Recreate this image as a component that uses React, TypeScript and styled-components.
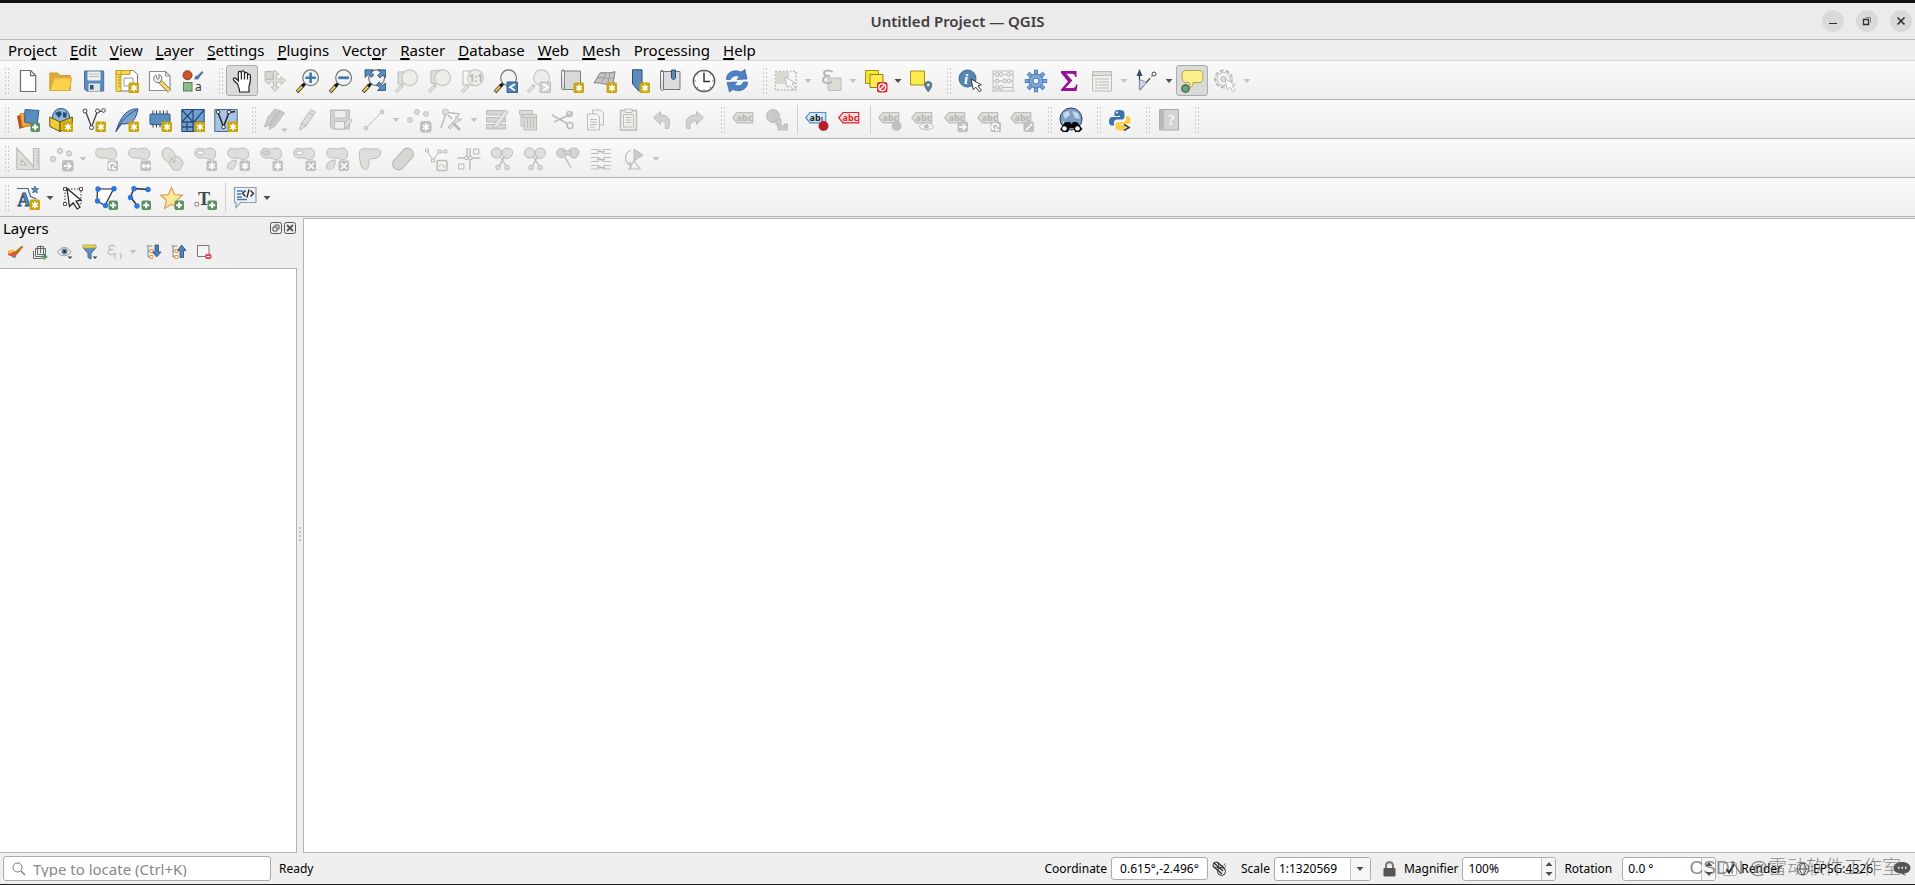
import React from "react";
import styled, { createGlobalStyle, css } from "styled-components";

const UI_FONT = '"Noto Sans", "Open Sans", "Noto Sans CJK SC", sans-serif';

const GlobalStyle = createGlobalStyle`
  *, *::before, *::after { box-sizing: border-box; }
  body { margin: 0; background: #efefef; color: #000; font-family: ${UI_FONT}; }
  button, input, select { font: inherit; color: inherit; margin: 0; }
  svg { flex: none; overflow: visible; }
`;

/* ---------- layout ---------- */

const Window = styled.div`
  display: flex;
  flex-direction: column;
  min-height: 100vh;
  border-top: 3px solid #111;
  border-bottom: 1px solid #231f20;
  overflow: hidden;
`;

const TitleBar = styled.header`
  display: grid;
  grid-template-columns: 1fr auto 1fr;
  align-items: center;
  height: 37px;
  padding: 0 3px;
  background: #ebebeb;
  border-bottom: 1px solid #bdbdbd;
`;

const Title = styled.h1`
  grid-column: 2;
  margin: 0;
  font-size: 15px;
  line-height: 20px;
  font-weight: 600;
  color: #3d3d3d;
`;

const WindowButtons = styled.div`
  display: flex;
  justify-content: flex-end;
  gap: 12px;
`;

const RoundButton = styled.button`
  display: grid;
  place-items: center;
  width: 22px;
  height: 22px;
  padding: 0;
  border: 0;
  border-radius: 50%;
  background: #dadada;
  color: #2e2e2e;
`;

const MenuBar = styled.nav`
  display: flex;
  gap: 13px;
  height: 21px;
  padding: 0 8px;
  background: #efefef;
  border-bottom: 1px solid #d9d9d9;
`;

const MenuItem = styled.button`
  padding: 0;
  border: 0;
  background: none;
  font-size: 15px;
  line-height: 20px;
`;

const Mnemonic = styled.span`
  text-decoration: underline;
  text-decoration-thickness: 2px;
  text-underline-offset: 2px;
  text-decoration-skip-ink: none;
`;

const ToolRow = styled.div`
  display: flex;
  height: 39px;
  border-bottom: 1px solid #b4b4b4;
  background: linear-gradient(#fafafa, #efefef);
`;

const ToolGroup = styled.div`
  display: flex;
  gap: 1px;
  padding: 4px 5px 3px 0;
`;

const Grip = styled.span`
  width: 5px;
  height: 28px;
  margin: 2px 2px 0 4px;
  background-image: radial-gradient(circle, #cacaca 1px, transparent 1px);
  background-size: 3px 4px;
`;

const ToolButton = styled.button<{ $checked?: boolean; $menu?: boolean }>`
  display: flex;
  align-items: center;
  width: ${(p) => (p.$menu ? 44 : 32)}px;
  height: 31px;
  padding: 0 3px;
  gap: 6px;
  border: 1px solid transparent;
  border-radius: 3px;
  background: none;
  ${(p) =>
    p.$checked &&
    css`
      border-color: #aaa;
      background: #dadada;
    `}
`;

const Divider = styled.span`
  width: 6px;
  margin: 1px 0;
  background: linear-gradient(#d0d0d0, #d0d0d0) center / 1px 100% no-repeat;
`;

const Workspace = styled.main`
  display: flex;
  flex: 1;
  min-height: 300px;
`;

const Dock = styled.aside`
  display: flex;
  flex-direction: column;
  width: 297px;
`;

const DockHeader = styled.div`
  display: flex;
  align-items: center;
  gap: 2px;
  height: 22px;
  padding: 0 1px 0 3px;
`;

const DockTitle = styled.h2`
  flex: 1;
  margin: 0;
  font-size: 15px;
  line-height: 20px;
  font-weight: 400;
`;

const DockButton = styled.button`
  width: 12px;
  height: 12px;
  padding: 0;
  border: 0;
  background: none;
  display: flex;
`;

const DockTools = styled.div`
  display: flex;
  align-items: center;
  gap: 1px;
  height: 29px;
  padding: 0 3px 3px;
`;

const SmallTool = styled.button<{ $menu?: boolean }>`
  display: flex;
  align-items: center;
  gap: 6px;
  width: ${(p) => (p.$menu ? 38 : 24)}px;
  height: 24px;
  padding: 0 4px;
  border: 0;
  background: none;
`;

const LayerTree = styled.div`
  flex: 1;
  border: 1px solid #b4b4b4;
  border-left: 0;
  background: #fff;
`;

const Splitter = styled.div`
  display: grid;
  place-items: center;
  width: 6px;
`;

const SplitterDots = styled.span`
  width: 2px;
  height: 16px;
  background: repeating-linear-gradient(#c4c4c4 0 2px, transparent 2px 4px);
`;

const MapCanvas = styled.section`
  flex: 1;
  margin-top: 1px;
  border: 1px solid #b4b4b4;
  border-right: 0;
  background: #fff;
`;

/* ---------- status bar ---------- */

const StatusBar = styled.footer`
  position: relative;
  display: flex;
  align-items: center;
  height: 31px;
  padding: 0 4px 0 3px;
  font-size: 12px;
  line-height: 16px;
`;

const Locator = styled.label`
  display: flex;
  align-items: center;
  gap: 7px;
  width: 268px;
  height: 25px;
  padding: 0 8px;
  border: 1px solid #acacac;
  border-radius: 3px;
  background: #fff;
`;

const LocatorInput = styled.input`
  flex: 1;
  min-width: 0;
  padding: 0;
  border: 0;
  outline: 0;
  background: none;
  font-size: 15px;
  &::placeholder { color: #888; opacity: 1; }
`;

const Message = styled.span`
  flex: 1;
  padding-left: 8px;
`;

const Field = styled.label<{ $after: number; $gap?: number }>`
  display: flex;
  align-items: center;
  gap: ${(p) => p.$gap ?? 4}px;
  margin-right: ${(p) => p.$after}px;
`;

const boxed = css`
  display: flex;
  height: 24px;
  border: 1px solid #acacac;
  border-radius: 3px;
  background: #fff;
  overflow: hidden;
`;

const CoordInput = styled.input`
  ${boxed}
  width: 97px;
  height: 23px;
  padding: 0;
  text-align: center;
`;

const Box = styled.span<{ $width: number }>`
  ${boxed}
  width: ${(p) => p.$width}px;
`;

const ScaleSelect = styled.select`
  flex: 1;
  min-width: 0;
  padding: 0 4px;
  border: 0;
  appearance: none;
  background: none;
`;

const SpinInput = styled.input`
  flex: 1;
  min-width: 0;
  padding: 0 5px;
  border: 0;
  background: none;
`;

const BoxEnd = styled.span<{ $width: number }>`
  display: flex;
  flex-direction: column;
  align-items: center;
  justify-content: center;
  width: ${(p) => p.$width}px;
  border-left: 1px solid #c4c4c4;
  background: #f6f6f6;
`;

const StepButton = styled.button`
  display: flex;
  align-items: center;
  height: 10px;
  padding: 0;
  border: 0;
  background: none;
`;

const StatusButton = styled.button<{ $after: number }>`
  display: flex;
  align-items: center;
  gap: 3px;
  margin-right: ${(p) => p.$after}px;
  padding: 0;
  border: 0;
  background: none;
`;

const CheckWrap = styled.span`
  position: relative;
  display: flex;
  width: 14px;
  height: 14px;
  svg { position: absolute; inset: 1px; pointer-events: none; }
`;

const CheckBox = styled.input`
  appearance: none;
  width: 14px;
  height: 14px;
  border: 1px solid #acacac;
  border-radius: 2px;
  background: #fff;
`;

const Watermark = styled.span`
  position: absolute;
  right: 14px;
  top: 0;
  font-family: "Liberation Sans", "Noto Sans CJK SC", sans-serif;
  font-size: 19px;
  line-height: 30px;
  font-weight: 300;
  color: rgba(90, 90, 90, 0.7);
  white-space: nowrap;
  pointer-events: none;
`;

/* ---------- drawings ---------- */

const F = "#dededb";
const S = "#bcbcb9";
const BLUE = "#5a8cbe";
const NAVY = "#2c4a6e";

const Star6 = ({ c = "#fff" }: { c?: string }) => (
  <path d="M19 15.5v7M16 17.2l6 3.6M22 17.2l-6 3.6" stroke={c} strokeWidth="1.5" fill="none" />
);
const Gold = () => (
  <g>
    <rect x="13.5" y="13.5" width="10.5" height="10.5" rx="1.5" fill="#c9a60c" />
    <Star6 />
    <circle cx="19" cy="19" r="1.8" fill="#fff" />
  </g>
);
const Green = () => (
  <g>
    <rect x="14.5" y="14.5" width="9.5" height="9.5" rx="1.8" fill="#5b8f62" />
    <path d="M19.2 16.2v6M16.2 19.2h6" stroke="#fff" strokeWidth="2" />
  </g>
);
const Gray = ({ d }: { d: string }) => (
  <g>
    <rect x="13.5" y="13.5" width="10.5" height="10.5" rx="1.8" fill="#c0c0bd" />
    <path d={d} stroke="#fff" strokeWidth="1.6" fill="none" />
  </g>
);
const G_STAR = "M19 15.2v7.6M15.8 17.1l6.2 3.8M22 17.1l-6.2 3.8";
const G_ARROW = "M15 19h6.5M18.7 16l3 3-3 3";
const G_X = "M16 16l6 6M22 16l-6 6";
const G_ROT = "M17 21.8a3.2 3.2 0 1 1 4.5-2.8M19 19v3h3";
const G_SCALE = "M15.5 19h7M17.5 17l-2 2 2 2M20.5 17l2 2-2 2";
const G_PEN = "M16 22l6-6";

const Lens = ({ off, children }: { off?: boolean; children?: React.ReactNode }) => (
  <g>
    <path d="M1 23L7.5 16" stroke={off ? "#c6c6c3" : "#3a3a30"} strokeWidth="3.6" />
    <path d="M1.4 22.4L6 17.5" stroke={off ? "#e2e2df" : "#f2d04a"} strokeWidth="2" />
    {!off && <path d="M6.5 17L9.5 14" stroke="#111" strokeWidth="3" />}
    <circle cx="14.6" cy="8.8" r="7.9" fill={off ? "#ededeb" : "#f2f4f4"} stroke={off ? "#c6c6c3" : "#6f7474"} strokeWidth="1.2" />
    {children}
  </g>
);
const PEANUT = "M1.8 6C1.8 1.5 5 .8 9 1.800s5-.9 8.500-.7c4 .2 5.500 3.500 5 7s-2.500 4.500-5 4.500S13 10.500 10 11 1.800 11 1.800 6z";
const Peanut = () => <path d={PEANUT} fill={F} stroke={S} />;
const Hole = () => <ellipse cx="7.500" cy="5.800" rx="3.500" ry="2" fill="#fafafa" stroke={S} />;
const Leaf = () => <path d="M1.500 20c0-5 4-6.500 9-7-1 2 0 5-2 7.500s-7 3-7-.5z" fill={F} stroke={S} />;
const Tag = ({ fill = F, stroke = S, text = "#b4b4b1", label = "abc" }) => (
  <g>
    <path d="M.8 9.700L5 4.500h15.700v10.300H5z" fill={fill} stroke={stroke} strokeWidth="1.2" />
    <text x="4.600" y="13" fontSize="9" fontWeight="700" fill={text} fontFamily="Noto Sans">
      {label}
    </text>
  </g>
);
const Pin = ({ c }: { c: string }) => (
  <g>
    <path d="M17 9v5" stroke={c} strokeWidth="1.200" />
    <circle cx="18.500" cy="18" r="5" fill={c} />
  </g>
);
const Cursor = ({ x = 0, y = 0, s = "#333" }) => (
  <path d={`M${x} ${y}l2.200 10.500 2.600-2.300 3.600 4.600 2-1.500-3.500-4.500 3.400-1z`} fill="#fff" stroke={s} strokeWidth="1" />
);
const Scissors = () => (
  <g fill={F} stroke={S}>
    <circle cx="6.500" cy="6" r="5.200" />
    <path d="M13 3c2-3 9-2.500 9.500 2s-4 7-7 6.500S11.500 6 13 3z" />
    <path d="M10 9l6 10M14.500 9l-5 10" strokeWidth="1.400" />
    <circle cx="8" cy="20.500" r="2.300" />
    <circle cx="17" cy="20.500" r="2.300" />
  </g>
);

const icons: Record<string, React.ReactNode> = {
  new: <path d="M4.500 1.500h10.200l5 5v16H4.500zM14.500 1.500v5.200h5.200" fill="#fff" stroke="#6d6d6d" strokeWidth="1.200" />,
  open: (
    <g>
      <path d="M.8 21.500V4h8l2 2.500h10.500v15z" fill="#e3a93a" stroke="#cc9a35" />
      <path d="M1 21.500L5.500 9h17.300l-2.500 12.500z" fill="#fcd24c" stroke="#dcae3c" />
    </g>
  ),
  save: (
    <g>
      <path d="M2.500 2h19.200v20H4.500l-2-2z" fill={BLUE} stroke="#4b6f95" />
      <path d="M5.500 2.500h13v9h-13z" fill="#efefef" />
      <path d="M7 5h10M7 7.500h10" stroke="#bdbdbd" />
      <path d="M6.500 14.500h11.500v7.500H6.500z" fill="#e0e4e8" />
      <path d="M8 16h3.500v4.500H8z" fill="#41505e" />
    </g>
  ),
  newLayout: (
    <g>
      <path d="M5 1.500h13.500l4 4v16.500H5z" fill="#fff" stroke="#777" />
      <path d="M1 1.500h5v21H1zM1 1.500h14v4H1z" fill="#f7d84e" stroke="#c3a12a" />
      <path d="M3.500 8h2M3.500 11h2M3.500 14h2M3.500 17h2" stroke="#8a7628" />
      <path d="M9 9h9v8H9z" fill="#fff" stroke="#999" />
      <Gold />
    </g>
  ),
  layouts: (
    <g>
      <path d="M1.500 2.500h16l4.500 4.500v14.500H1.500z" fill="#fff" stroke="#8a8f99" strokeWidth="1.200" />
      <path d="M17.500 2.500V7H22" fill="none" stroke="#8a8f99" />
      <path d="M12 12.500l9.500 9.500" stroke="#8a7a3a" strokeWidth="4.400" />
      <path d="M12.500 13l8.800 8.800" stroke="#f3dc73" strokeWidth="2.800" />
      <path d="M8 6c-2.500 1-3 4.500-1 6.500 1.500 1.500 4 1.500 5.500.3l1.500-3.300C14 7 12 5.500 10.500 5.800l1 3-2 1.500z" fill="#eee" stroke="#777" />
    </g>
  ),
  style: (
    <g>
      <circle cx="6.500" cy="6.200" r="4.500" fill="#c9532c" stroke="#9a3f20" />
      <rect x="2.500" y="13.500" width="8.500" height="8.500" fill="#8fb98b" stroke="#56805a" />
      <path d="M13.500 10.500c0-3 1-4 3-4L21 2l1.500 1.500-4 4.800c0 2-2 2.500-5 2.200z" fill="#5577a6" />
      <text x="14" y="22" fontSize="12" fill="#333" fontFamily="Noto Sans">a</text>
    </g>
  ),
  hand: (
    <path
      d="M7.500 15L3.800 11.500c-1.500-2 .6-3.300 2-2l2.500 2.300V4c0-2.300 2.800-2.300 3 0 0-3 3.100-3 3.200 0v.8c.2-2 2.900-2 3 .3v1c.4-1.600 2.800-1.400 2.900.6 0 4 .5 7-1.400 10.500V23H9.700c0-3-1-5-2.200-8zM11.400 4v6.500M14.500 4.500v6M17.500 5.500v5"
      fill="#fff" stroke="#222" strokeWidth="1.200"
    />
  ),
  pan: (
    <g fill={F} stroke={S}>
      <path d="M12 1l4 4.500h-2.500V10H18V7.500l4.500 4-4.500 4V13h-4.500v5H16l-4 4.500L8 18h2.500v-5H6v2.500l-4.500-4L6 7.500V10h4.500V5.500H8z" />
      <path d="M2 2.500h8v8H2z" fill="#d4d4d1" />
    </g>
  ),
  zoomIn: <Lens><path d="M14.600 3.500v10.600M9.300 8.800h10.600" stroke="#3f78ae" strokeWidth="2.600" /></Lens>,
  zoomOut: <Lens><path d="M9.300 8.800h10.600" stroke="#3f78ae" strokeWidth="2.800" /></Lens>,
  zoomFull: (
    <g>
      <Lens />
      <path d="M3 .8h8L8.800 3l3 3-2.500 2.500-3-3L3 8.500zM23.500.8v7.700L21 6l-3 3-2.500-2.500 3-3L16 .8zM23.500 21.500h-8L18 19l-3.500-3.500L17 13l3.500 3.500 3-2.500z" fill={BLUE} stroke={NAVY} strokeWidth=".8" />
    </g>
  ),
  zoomSel: <g><path d="M3 3h12v12H3z" fill={F} stroke={S} /><Lens off /></g>,
  zoomLayer: <g><path d="M3 2l12-1v15l-12-2z" fill={F} stroke={S} /><Lens off /></g>,
  zoomNative: (
    <g>
      <path d="M2 2h14v14H2z" fill="none" stroke={S} />
      <Lens off><text x="7.800" y="12.500" fontSize="10" fontWeight="700" fill="#b4b4b1" fontFamily="Noto Sans">1:1</text></Lens>
    </g>
  ),
  zoomLast: <g><Lens /><path d="M13 13h10.500v10.500H13z" fill="#4d81b5" stroke="#35618e" /><path d="M21 15l-5 3.300 5 3.300" stroke="#fff" strokeWidth="1.800" fill="none" /></g>,
  zoomNext: <g><Lens off /><path d="M13 13h10.500v10.500H13z" fill="#d4d4d1" stroke={S} /><path d="M16 15l5 3.300-5 3.300" stroke="#fff" strokeWidth="1.800" fill="none" /></g>,
  newMap: <g><path d="M1.500 2c0-1.500 3-1.500 3 0v18.500h16V2h-18M1.500 2v17c0 2.500 3 2 3 0" fill="#d9d9d9" stroke="#808080" /><Gold /></g>,
  new3d: <g><path d="M7 4c6-1 9 1 15-1.500L20 15c-6 2-12-2-19-1z" fill="#c4c4c4" stroke="#808080" /><path d="M5 9c6-2 10 2 16 0M13 4L9 13M17 4l-2 10" stroke="#9c9c9c" fill="none" /><Gold /></g>,
  bookmark: <g><path d="M6.500 .8h9.500v21h-3.500l-6-7z" fill={BLUE} stroke={NAVY} /><Gold /></g>,
  bookmarks: <g><path d="M1.500 2.500c0-1.500 3-1.500 3 0v18h16.500v-18H2M1.500 2.500v17c0 2.500 3 2.500 3 1" fill="#dcdcdc" stroke="#777" /><path d="M12.500 1h4v8l-2 2-2-2z" fill={BLUE} stroke={NAVY} /></g>,
  clock: (
    <g>
      <circle cx="12" cy="12" r="10.700" fill="#fff" stroke="#555" strokeWidth="1.300" />
      <path d="M12 4v8.500h6" fill="none" stroke="#333" strokeWidth="1.500" />
      <path d="M12 2v2M12 20v2M2 12h2M20 12h2M5 5l1.200 1.200M19 5l-1.200 1.200M5 19l1.200-1.200M19 19l-1.200-1.200" stroke="#777" />
    </g>
  ),
  refresh: (
    <g fill="#4d81c0" stroke="#3566a0" strokeWidth=".7">
      <path d="M1.500 10.500C1 4 8.500-.5 16 3l4-2.500 2 9.500-10 .5 2.500-3C11 6 7 7 5.500 10.500z" />
      <path d="M22.500 13c.5 6.500-7 11-14.500 7.500L4.500 23 2 13.500l10-.5-2.500 3c3.500 1.500 7.500 1 9-3z" />
    </g>
  ),
  select: <g><path d="M1.500 2.500H22v18.500H1.500z" fill="none" stroke={S} strokeWidth="1.500" strokeDasharray="2 1.500" /><path d="M2 3h13v12H2z" fill="#d8d8d3" /><Cursor x={11} y={8} s={S} /></g>,
  selectExpr: <g><path d="M9 9h13v12.500H9z" fill="#dcdcd7" stroke={S} /><path d="M14 3C10 .5 5 1 5 4s4 3 6 3c-4 0-7 1-7 4s5 4 9 2" fill="none" stroke="#b8b8b5" strokeWidth="2" /></g>,
  deselect: (
    <g>
      <path d="M1.500 1.500h13v13h-13z" fill="#f7e331" stroke="#a3931c" />
      <path d="M6 5.500h13v13H6z" fill="#fdea4c" stroke="#8f821c" />
      <rect x="13" y="13" width="10.500" height="10.500" rx="2" fill="#d8343c" />
      <circle cx="18.200" cy="18.200" r="3.400" fill="none" stroke="#fff" strokeWidth="1.300" /><path d="M16 20.500l4.500-4.500" stroke="#fff" strokeWidth="1.300" />
    </g>
  ),
  location: <g><path d="M1.500 2h14v14h-14z" fill="#fdea4c" stroke="#a3931c" /><path d="M19.300 23c-2-3-3.600-5-3.600-7a3.600 3.600 0 0 1 7.200 0c0 2-1.600 4-3.600 7z" fill="#5a8596" stroke="#446" strokeWidth=".6" /><circle cx="19.300" cy="16" r="1.300" fill="#fff" /></g>,
  info: <g><circle cx="9.500" cy="9.500" r="8.500" fill="#5585b5" stroke="#41698f" /><text x="6" y="15" fontSize="15" fontWeight="700" fontStyle="italic" fill="#fff" fontFamily="Liberation Serif">i</text><Cursor x={13} y={10} /></g>,
  abacus: <g fill="#eaeae7" stroke={S}><path d="M2 1.500v20M22 1.500v20M2 5.500h20M2 12h20M2 18.500h20M.5 22h23M2 2h20" fill="none" /><circle cx="6" cy="5.500" r="2" /><circle cx="10" cy="5.500" r="2" /><circle cx="17.500" cy="5.500" r="2" /><circle cx="6" cy="12" r="2" /><circle cx="13.500" cy="12" r="2" /><circle cx="18" cy="12" r="2" /><circle cx="6" cy="18.500" r="2" /><circle cx="10" cy="18.500" r="2" /></g>,
  gear: (
    <g>
      <path d="M12 .8v22.400M.8 12h22.400M4.100 4.100l15.800 15.800M19.900 4.100L4.100 19.900" stroke="#4474ab" strokeWidth="4" />
      <path d="M12 1.500v21M1.500 12h21M4.600 4.600l14.800 14.800M19.400 4.600L4.600 19.400" stroke="#7fa9dd" strokeWidth="2.400" />
      <circle cx="12" cy="12" r="7" fill="#7fa9dd" stroke="#4474ab" /><circle cx="12" cy="12" r="3" fill="#f6f6f6" stroke="#4474ab" />
    </g>
  ),
  sigma: <path d="M4 2h15.500v6h-1.200c-.5-2.500-1.300-3.200-3.500-3.200H9.300l6 6.700-6.800 7.500h7c2.200 0 3-1 3.800-3.500h1.200L19.500 22H4v-1.500l7-8L4 4z" fill="#971097" />,
  table: <g><path d="M2.500 2.500h19v19.500h-19z" fill="#efefec" stroke={S} /><path d="M2.500 2.500h19v4h-19z" fill="#dcdcd9" stroke={S} /><path d="M5 10h3M9 10h10M5 13h3M9 13h10M5 16h3M9 16h10M5 19h3M9 19h10" stroke={S} /></g>,
  measure: <g><path d="M4.500 21V3" stroke="#333" strokeWidth="1.200" /><path d="M4.500 0L1.500 7h6z" fill={NAVY} /><path d="M4.500 21L17 7" stroke="#444" strokeDasharray="7 2" strokeWidth="1.300" /><circle cx="19" cy="5" r="2" fill="#fff" stroke="#444" /><path d="M4.500 11c4 0 6 2 6.500 3.500L4.500 21z" fill="#cfd3ea" stroke="#8b90bd" /></g>,
  tips: <g><path d="M5 1.500h15c4 0 4 12 0 12h-7c0 3-1 4.500-3.500 6 .8-2 .5-4-.5-6H5c-4 0-4-12 0-12z" fill="#fbf08c" stroke="#b3a64a" /><circle cx="5.500" cy="19.500" r="3.700" fill="#6ba585" stroke="#3e5a4a" strokeWidth="1.200" /></g>,
  actions: <g><circle cx="10.500" cy="10" r="8.500" fill="none" stroke={S} strokeWidth="2" strokeDasharray="4 2" /><circle cx="10.500" cy="10" r="6.500" fill="none" stroke={S} /><circle cx="10.500" cy="10" r="2.800" fill={F} stroke={S} /><Cursor x={12} y={10} s={S} /></g>,

  dataSource: <g><path d="M1 8l12-3.500 2 12L3.500 21z" fill="#c3481f" /><path d="M4 6l13-2 1 13-12 2z" fill="#f0a93c" stroke="#b97c1d" /><path d="M9 1.500l14 1L21 17 8.500 14z" fill={BLUE} stroke="#34618f" /><Green /></g>,
  geopackage: <g><circle cx="12" cy="9" r="8.500" fill="#8db7e0" stroke="#2f4f78" /><path d="M6 5l5-2 2 3-3 4zM14 4l4 1-1 5-3-1z" fill={NAVY} /><path d="M.8 9L11 14v9.500L.8 18.500z" fill="#f3cd38" stroke="#5f5211" /><path d="M23.300 9L11 14v9.500L23.300 18z" fill="#dfb71f" stroke="#5f5211" /><Gold /></g>,
  shapefile: <g><path d="M3.500 3L9.500 19 15 4.500 21 2.500" fill="none" stroke="#444" strokeWidth="1.300" /><g fill="#fff" stroke="#444"><circle cx="3" cy="3" r="2" /><circle cx="15.500" cy="3" r="2" /><circle cx="21.500" cy="2.500" r="1.800" /><circle cx="9.500" cy="19.500" r="2" /></g><Gold /></g>,
  spatialite: <g><path d="M1 23.500C3 17 5 12 9 7c4-4.500 9-6.500 14-6-1 4-2 9-6 13-3 2-8 2-10.500 2z" fill="#7ba2d3" stroke="#2f4f78" /><path d="M1 23.500C5 14 12 7 22 1.500" fill="none" stroke="#2f4f78" /><Gold /></g>,
  memory: <g><path d="M5 2.500v17M8.500 2.500v17M12 2.500v17M15.500 2.500v17M19 2.500v17" stroke="#333" /><rect x="2" y="6" width="20" height="10.500" rx="1" fill={BLUE} stroke="#2f5b8c" /><Gold /></g>,
  mesh: <g><path d="M.8 1.500h22.400v22H.8z" fill="#6d9fd8" stroke={NAVY} /><path d="M.8 14h22.400M12 1.500V23M1 2l11 12M12 2L1 14M13 14L23 2M6 14v9M1 19h11" stroke={NAVY} strokeWidth="1.300" fill="none" /><Gold /></g>,
  virtual: <g><path d="M.8 1.500h22.400v22H.8z" fill="#a5c4e6" stroke="#4b6f95" /><path d="M4 4.500L9.500 19 15 4.500 21 3.500" fill="none" stroke="#222" strokeWidth="1.500" /><circle cx="4" cy="4" r="1.800" fill="#fff" stroke="#333" /><circle cx="15" cy="4" r="1.800" fill="#fff" stroke="#333" /><circle cx="9.500" cy="19" r="1.800" fill="#fff" stroke="#333" /><Gold /></g>,
  edits: <g fill="#cbcbc8" stroke="#bcbcb9"><path d="M1.500 19L5 9l7-8 5 2-7 13zM6 21.500l2-7L16 2l5.500 3L12 18z" /><path d="M19 21h5l-2.500 2.500z" /></g>,
  pencil: <path d="M3.500 22.500L5.500 15 15 1.500l4.500 2.500L10 18zM5.500 15l4.500 3M13 5l4.500 2.500" fill={F} stroke={S} />,
  saveEdits: <g><path d="M1.500 2h19v19H3.500l-2-2z" fill="#d2d2cf" stroke={S} /><path d="M5 2.500h12v7.500H5zM5.500 13.500h10V21h-10z" fill="#efefef" stroke={S} /><path d="M15 20l1-5 4-5 3 2-4 6z" fill={F} stroke={S} /></g>,
  line: <g fill={F} stroke={S}><path d="M4 20L20 4" /><circle cx="4" cy="20" r="2" /><circle cx="20" cy="4" r="2" /></g>,
  addPoints: <g fill={F} stroke={S}><circle cx="3" cy="12" r="2.400" /><circle cx="10" cy="4" r="2.400" /><circle cx="19" cy="6" r="2.400" /><Gray d={G_STAR} /></g>,
  vertex: <g fill={F} stroke={S}><path d="M1 20L6 5M5 4l15 2M8 7l4 4" fill="none" strokeWidth="1.500" /><circle cx="5.500" cy="4" r="3" /><path d="M8 19l8-8c-1-2 1-4 3-3l-2 2 2 2 2-2c1 2-1 4-3 3l-8 8z" /><path d="M13 15l7 7" strokeWidth="2.500" /></g>,
  multi: <g fill="#d8d8d3" stroke={S}><path d="M1.500 2.500h19V7h-19zM1.500 9.500h19V14h-19zM1.500 16.500h19V21h-19z" /><path d="M8 21l2-6L20 2l3 2-9.500 14z" fill="#e4e4e2" /></g>,
  trash: <g fill="#dcdcd7" stroke={S}><path d="M1.500 2.500h13v4h-13zM3 6v12h4" /><path d="M4.500 6.500h14v3h-14zM6 9.500h12.500V22H6zM9.500 11v9M12.300 11v9M15.500 11v9" /></g>,
  cut: <g fill="none" stroke={S} strokeWidth="1.500"><path d="M1 7l16 9M3 14l19-9" /><circle cx="18.500" cy="6" r="2.500" /><circle cx="19" cy="17.500" r="3" /></g>,
  copy: <g fill="#f3f3f1" stroke={S}><path d="M8.500 2h8l3 3v12H8.500z" /><path d="M3.500 6h9l3 3v13h-12zM6 11.500h7M6 14h7M6 16.500h7M6 19h5" /></g>,
  paste: <g fill="#efefec" stroke={S}><path d="M3.500 2.500h16V22h-16z" strokeWidth="1.500" /><path d="M8 1h7v3.500H8zM6.500 6.500h10V19h-10zM8.500 9.500h6M8.500 12h6M8.500 14.500h6" /></g>,
  undo: <path d="M3.500 9.500L10.500 3.500v3.500c8-.5 11 5 8 13.500H15c1.500-4.500 0-7.500-4.500-7.500v3.500z" fill="#d2d2cf" stroke={S} />,
  redo: <path d="M20.500 9.500L13.500 3.500v3.500c-8-.5-12.500 5-9.500 13.500h3c-1-4.500 1.500-7.500 6.500-7.500v3.500z" fill="#d2d2cf" stroke={S} />,
  tag: <Tag />,
  diagram: <g fill="#cbcbc8" stroke={S}><circle cx="8" cy="8" r="6.500" /><path d="M8 8v6.500M8 8l5-4" /><path d="M11 11h5v7h3v-2h3.500v6H13v-5h-2z" /></g>,
  tagPin: <g><Tag fill="#d3e7fb" stroke="#4a90d0" text="#222" label="ab" /><Pin c="#b3202c" /></g>,
  tagRed: <Tag fill="#fbe1e1" stroke="#e01f2a" text="#e01f2a" />,
  tagPinOff: <g><Tag /><Pin c="#c0c0bd" /></g>,
  tagEye: <g><Tag /><path d="M8 18.500c4-5 11-5 15 0-4 4.500-11 4.500-15 0z" fill="#f3f3f1" stroke={S} /><circle cx="15.500" cy="18.500" r="2.200" fill="#bbb" /></g>,
  tagMove: <g><Tag /><Gray d={G_ARROW} /></g>,
  tagRotate: <g><Tag /><Gray d={G_ROT} /></g>,
  tagEdit: <g><Tag /><Gray d={G_PEN} /></g>,
  globe: <g><circle cx="12" cy="11" r="11" fill="#7f9fc4" stroke="#2d3f58" /><path d="M4 5l6-2 1 4-5 4zM13 3l6 2 2 6-5-1zM3 13l4 1-1 4z" fill="#c2d8ef" /><path d="M6 14h5l1.500 2 1.500-2h4l5.500 7-3 3h-4.500l-1.500-4h-4L9 24H4l-3-2.500z" fill="#080808" /><circle cx="5.500" cy="20.500" r="2.300" fill="#fff" /><circle cx="18.500" cy="20.500" r="2.300" fill="#fff" /></g>,
  python: (
    <g>
      <path d="M11 2c-4 0-4.500 1.500-4.500 3.500V8H12v1H4.500C2 9 1 11 1 13.500s1 4 3 4h2v-3c0-2 1.500-3 3-3h5c1.500 0 2.500-1 2.500-2.500V5.500C16.500 3 15 2 11 2z" fill="#3a74a8" />
      <path d="M18 8v3c0 2-1.500 3.200-3 3.200h-5c-1.500 0-2.500 1-2.500 2.500v2.800c0 2 2 3 4.500 3s5-.5 5-3V17h-5v-1h7.500c2.500 0 3-2 3-4s-1-4-3-4z" fill="#fbcf3e" />
      <circle cx="9" cy="4.600" r="1" fill="#fff" /><path d="M16 16.500l5 3-5 3" fill="none" stroke="#444" strokeWidth="1.700" />
    </g>
  ),
  help: <g><path d="M2.500 1.500h19v20.500h-19z" fill="#d4d4d1" stroke="#a8a8a5" /><path d="M2.500 1.500H7V22H2.500z" fill="#b9b9b6" /><text x="10.500" y="17" fontSize="15" fill="#f8f8f8" fontFamily="Liberation Serif" fontWeight="700">?</text></g>,

  setSquare: <g fill={F} stroke={S} strokeWidth="1.200"><path d="M.8 1v21.500h19.500zM5.500 13v5h5z" fillRule="evenodd" /><path d="M17.500 1.500h5.500v21h-5.500zM20 5h3M20 8h3M20 11h3M20 14h3M20 17h3" /></g>,
  movePoints: <g fill={F} stroke={S}><circle cx="4" cy="12" r="2.600" /><circle cx="11" cy="4" r="2.600" /><circle cx="20" cy="6.500" r="2.600" /><Gray d={G_ARROW} /></g>,
  rotateF: <g><Peanut /><Gray d={G_ROT} /></g>,
  scaleF: <g><Peanut /><Gray d={G_SCALE} /></g>,
  simplify: <g fill={F} stroke={S}><path d="M2 6c0-5 7-7 10-3s3 5 5 7-2 8-7 6S2 11 2 6z" /><path d="M13 10h6.500l4 6-4 7H13l-4-7zM9 9l6 6M15 11.500V15h-3.500" /></g>,
  addRing: <g><Peanut /><Hole /><Gray d={G_STAR} /></g>,
  addPart: <g><Peanut /><Leaf /><Gray d={G_STAR} /></g>,
  fillRing: <g><Peanut /><ellipse cx="7.500" cy="5.800" rx="3.500" ry="2" fill="#d2d2cf" stroke={S} /><Gray d={G_STAR} /></g>,
  delRing: <g><Peanut /><Hole /><Gray d={G_X} /></g>,
  delPart: <g><Peanut /><Leaf /><Gray d={G_X} /></g>,
  reshape: <path d="M1.500 5C2 1 7 1.500 11 2s11-2 11.500 3-4 7-8 6.500-3 3-4 7-2 4.500-5 3.500S1 10 1.500 5z" fill={F} stroke={S} />,
  offset: <g fill="none" strokeLinecap="round"><path d="M7.500 17L16.500 7" stroke={S} strokeWidth="13" /><path d="M7.500 17L16.500 7" stroke="#d6d6d3" strokeWidth="10.500" /></g>,
  trim: <g fill="#f0f0ee" stroke={S}><path d="M3 4l6 9 6-8h6" fill="none" /><path d="M1.500 2h3v3h-3zM14 3h3v3h-3zM20 3h3v3h-3zM7.500 12h3v3h-3z" /><rect x="13" y="13.500" width="10" height="10" rx="2" strokeWidth="1.500" /><path d="M15 20c1-3 3-3 4-1s2 1 3-1" fill="none" /></g>,
  crossing: <g fill="#f0f0ee" stroke={S}><path d="M.5 11h23M13 1v22M10 1v10" strokeWidth="1.500" /><path d="M16.500 2h5.500v5h-5.500zM1.500 17h5.500v5H1.500zM8 9.500h3v3H8zM12 9.500h3v3h-3z" /></g>,
  split: <Scissors />,
  splitParts: <Scissors />,
  merge: <g fill="#d4d4d1" stroke={S}><circle cx="5.500" cy="6" r="4.800" /><path d="M14 2c3-2 9-1 9 3s-3 6.500-6 6-6-7-3-9z" /><path d="M7 4h8v4H9z" /><path d="M9 10l6 11" strokeWidth="1.500" /></g>,
  mergeAttr: <g fill="none" stroke={S}><path d="M2 2.500h8M14 2.500h8M2 6.500h8M14 6.500h8M2 10.500h8M14 10.500h8M2 14.500h8M14 14.500h8M2 18.500h8M14 18.500h8M2 22h8M14 22h8" /><path d="M8 4.500h8M8 12.500h8M8 20.500h8M10 3l4 3M10 11l4 3M10 19l4 3" strokeWidth="1.500" /></g>,
  rotSym: <g fill={F} stroke={S}><path d="M12 2l9 6-9 6z" fill="#cbcbc8" /><path d="M9 3C2 6 2 15 8 18M6 16l3 3-1-4.500M12 14l6 8H7z" fill="none" strokeWidth="1.200" /></g>,

  annotLayer: <g><path d="M1 2.500h11l2.500 8 6 2.500" fill="none" stroke="#40658c" strokeWidth="1.200" /><text x="1.500" y="20" fontSize="18" fontWeight="700" fill={BLUE} stroke={NAVY} strokeWidth=".8" fontFamily="Liberation Serif">A</text><path d="M19 0l1 2.500h2.700l-2 1.800.7 2.700L19 5.500 16.700 7l.7-2.700-2-1.800H18z" fill={BLUE} stroke={NAVY} strokeWidth=".6" /><Gold /></g>,
  annotSelect: <g><path d="M4 3h16v15H4z" fill="none" stroke="#333" strokeDasharray="1.500 1.500" /><path d="M2.500 1.500h3v3h-3zM18.500 1.500h3v3h-3zM2.500 16.500h3v3h-3z" fill="#fff" stroke="#555" /><path d="M6 2.500l2.500 18 3.700-3.700 4 6.200 2.800-1.800-4-6 5-1z" fill="#fff" stroke="#222" strokeWidth="1.200" /></g>,
  annotPoly: <g><path d="M3.500 3h16L11 19.500 3 15z" fill="#fff" stroke="#222" strokeWidth="1.200" /><g fill="#2d78dc"><circle cx="4" cy="3" r="2.700" /><circle cx="20" cy="2.800" r="2.700" /><circle cx="3.500" cy="15" r="2.700" /><circle cx="11.500" cy="19.500" r="2.700" /></g><Green /></g>,
  annotLine: <g><path d="M21 3.500L7 2.500 3.500 11 10 19.500" fill="none" stroke="#222" strokeWidth="1.300" /><g fill="#2d78dc"><circle cx="7" cy="2.800" r="2.700" /><circle cx="21" cy="3.500" r="2.700" /><circle cx="3.500" cy="11.500" r="2.700" /><circle cx="10" cy="20" r="2.700" /></g><Green /></g>,
  annotStar: <g><path d="M11.500 1.500l3 7 8 .8-6 5.200 2 8-7-4.200-7 4.200 2-8-6-5.200 8-.8z" fill="#fdeb9c" stroke="#dd9f55" strokeWidth="1.200" /><Green /></g>,
  annotText: <g><path d="M2 16.500h3.500V20H2z" fill="#fff" stroke="#888" /><text x="5" y="18.500" fontSize="18" fontWeight="700" fill="#444" fontFamily="Liberation Serif">T</text><Green /></g>,
  annotHtml: <g><path d="M1.500 1.500h21.500v15H7.500L3 21.500v-5H1.500z" fill="#eef3f8" stroke="#8ca0b3" strokeWidth="1.200" /><path d="M4 5h6M4 8h4M4 11h5M4 13.500h10" stroke="#4a78b0" strokeWidth="1.400" /><path d="M12.500 4.500L9.500 7.500l3 3M17.500 4.500l3 3-3 3M16 3.500L14 11.500" fill="none" stroke="#222" strokeWidth="1.300" /></g>,
};

const smallIcons: Record<string, React.ReactNode> = {
  brush: <g><path d="M8 8l7-6 .8 1L10 10z" fill="#b5762b" stroke="#b5762b" /><path d="M1 7l5-1 4 4-2 4-7-3z" fill="#e2553c" /><path d="M.5 8l5-3 2 2-5 3z" fill="#f5c83a" /><path d="M5 13l4-2-1 3z" fill="#4d86c6" /></g>,
  addGroup: <g fill="none" stroke="#666"><path d="M1.500 7v7.500h9M3.500 4.500v8h10v-8zM5.500 2.500v8h6v-8zM8.500 9V1.500" /><path d="M12.500 10v5.500M9.700 12.700h5.600" stroke="#4f9156" strokeWidth="2" /></g>,
  eye: <g><path d="M.5 8c4-6 10-6 13.500 0-3.500 5-10 5-13.500 0z" fill="#eee" stroke="#999" /><circle cx="7.500" cy="7.500" r="3" fill="#5f80a8" /><circle cx="7.500" cy="7.500" r="1.300" fill="#223" /><path d="M10.500 12.500h5l-2.500 2.500z" fill="#444" /></g>,
  filter: <g><path d="M1 3.500h13L9 9.500V15l-3-1.500v-4z" fill="#5f8fc4" stroke="#41698f" /><path d="M1 1h13v3H1z" fill="#e8d84e" stroke="#a79c3c" strokeWidth=".7" /><path d="M10.500 12.500h5l-2.500 2.500z" fill="#444" /></g>,
  expr: <g fill="none" stroke="#c0c0c0" strokeWidth="1.300"><path d="M8 2.500C5.500.5 2 1 2 3.500s2 2 4 2C3 5.500 1 6.500 1 8.500s4 3 7 1" /><path d="M9 9c-1.500 2-1.500 4 0 6M13 9c1.500 2 1.500 4 0 6" /></g>,
  expand: <g><path d="M.5 2h6M2 2v11h4M2 7h4" stroke="#888" fill="none" /><path d="M4 5.500h3v3H4zM4 11.500h3v3H4z" fill="#fff" stroke="#e29c34" /><path d="M9 1h3.500v7H15l-4.300 5L6.500 8H9z" fill="#4d82be" stroke={NAVY} strokeWidth=".8" /></g>,
  collapse: <g><path d="M.5 2h6M2 2v11h4M2 7h4" stroke="#888" fill="none" /><path d="M4 5.500h3v3H4zM4 11.500h3v3H4z" fill="#fff" stroke="#e29c34" /><path d="M9 13.500h3.500v-7H15L10.700 1 6.500 6.500H9z" fill="#4d82be" stroke={NAVY} strokeWidth=".8" /></g>,
  remove: <g><path d="M1.500 1.500h11.500v11H1.500z" fill="#f4f4f4" stroke="#777" /><rect x="9" y="10" width="6.500" height="5" rx="2" fill="#e0455a" /><path d="M10.500 12.500h3.500" stroke="#fff" /></g>,
};

const Icon = ({ name }: { name: string }) => (
  <svg width="24" height="24" viewBox="0 0 24 24" aria-hidden="true">
    {icons[name]}
  </svg>
);

const Triangle = ({ off, up }: { off?: boolean; up?: boolean }) => (
  <svg width="8" height="6" viewBox="0 0 8 6" aria-hidden="true">
    <path d={up ? "M0.500 5h7L4 1z" : "M0.500 1h7L4 5z"} fill={off ? "#c4c4c4" : "#4f4f4f"} />
  </svg>
);

/* ---------- data ---------- */

// Flags: "!" disabled, "v" has a drop-down arrow, "*" checked.
type Tool = [icon: string, label: string, flags?: string];
const SEP: Tool = ["", "separator"];

const toolRows: Tool[][][] = [
  [
    [["new", "New Project"], ["open", "Open Project"], ["save", "Save Project"], ["newLayout", "New Print Layout"], ["layouts", "Layout Manager"], ["style", "Style Manager"]],
    [["hand", "Pan Map", "*"], ["pan", "Pan Map to Selection", "!"], ["zoomIn", "Zoom In"], ["zoomOut", "Zoom Out"], ["zoomFull", "Zoom Full"], ["zoomSel", "Zoom to Selection", "!"], ["zoomLayer", "Zoom to Layer", "!"], ["zoomNative", "Zoom to Native Resolution", "!"], ["zoomLast", "Zoom Last"], ["zoomNext", "Zoom Next", "!"], ["newMap", "New Map View"], ["new3d", "New 3D Map View"], ["bookmark", "New Spatial Bookmark"], ["bookmarks", "Show Spatial Bookmarks"], ["clock", "Temporal Controller"], ["refresh", "Refresh"]],
    [["select", "Select Features", "!v"], ["selectExpr", "Select by Expression", "!v"], ["deselect", "Deselect Features", "v"], ["location", "Select by Location"]],
    [["info", "Identify Features"], ["abacus", "Field Calculator", "!"], ["gear", "Toolbox"], ["sigma", "Statistical Summary"], ["table", "Attribute Table", "!v"], ["measure", "Measure", "v"], ["tips", "Map Tips", "*"], ["actions", "Run Feature Action", "!v"]],
  ],
  [
    [["dataSource", "Data Source Manager"], ["geopackage", "New GeoPackage Layer"], ["shapefile", "New Shapefile Layer"], ["spatialite", "New SpatiaLite Layer"], ["memory", "New Temporary Scratch Layer"], ["mesh", "New Mesh Layer"], ["virtual", "New Virtual Layer"]],
    [["edits", "Current Edits", "!"], ["pencil", "Toggle Editing", "!"], ["saveEdits", "Save Layer Edits", "!"], ["line", "Digitize with Segment", "!v"], ["addPoints", "Add Point Feature", "!"], ["vertex", "Vertex Tool", "!v"], ["multi", "Modify Attributes", "!"], ["trash", "Delete Selected", "!"], ["cut", "Cut Features", "!"], ["copy", "Copy Features", "!"], ["paste", "Paste Features", "!"], ["undo", "Undo", "!"], ["redo", "Redo", "!"]],
    [["tag", "Layer Labeling Options", "!"], ["diagram", "Layer Diagram Options", "!"], SEP, ["tagPin", "Highlight Pinned Labels"], ["tagRed", "Toggle Unplaced Labels"], SEP, ["tagPinOff", "Pin Labels", "!"], ["tagEye", "Show Labels", "!"], ["tagMove", "Move Label", "!"], ["tagRotate", "Rotate Label", "!"], ["tagEdit", "Change Label", "!"]],
    [["globe", "MetaSearch"]],
    [["python", "Python Console"]],
    [["help", "Help Contents", "!"]],
    [],
  ],
  [
    [["setSquare", "Enable Advanced Digitizing", "!"], ["movePoints", "Move Feature", "!v"], ["rotateF", "Rotate Feature", "!"], ["scaleF", "Scale Feature", "!"], ["simplify", "Simplify Feature", "!"], ["addRing", "Add Ring", "!"], ["addPart", "Add Part", "!"], ["fillRing", "Fill Ring", "!"], ["delRing", "Delete Ring", "!"], ["delPart", "Delete Part", "!"], ["reshape", "Reshape Features", "!"], ["offset", "Offset Curve", "!"], ["trim", "Reverse Line", "!"], ["crossing", "Trim or Extend", "!"], ["split", "Split Features", "!"], ["splitParts", "Split Parts", "!"], ["merge", "Merge Features", "!"], ["mergeAttr", "Merge Attributes", "!"], ["rotSym", "Rotate Point Symbols", "!v"]],
  ],
  [
    [["annotLayer", "New Annotation Layer", "v"], ["annotSelect", "Modify Annotations"], ["annotPoly", "Polygon Annotation"], ["annotLine", "Line Annotation"], ["annotStar", "Marker Annotation"], ["annotText", "Text Annotation"], SEP, ["annotHtml", "HTML Annotation", "v"]],
  ],
];

const menus: [string, number][] = [
  ["Project", 3], ["Edit", 0], ["View", 0], ["Layer", 0], ["Settings", 0], ["Plugins", 0], ["Vector", 4],
  ["Raster", 0], ["Database", 0], ["Web", 0], ["Mesh", 0], ["Processing", 3], ["Help", 0],
];

const dockTools: Tool[] = [
  ["brush", "Layer Styling"], ["addGroup", "Add Group"], ["eye", "Map Themes"], ["filter", "Filter Legend"],
  ["expr", "Filter by Expression", "!v"], ["expand", "Expand All"], ["collapse", "Collapse All"], ["remove", "Remove Layer"],
];

/* ---------- components ---------- */

const ToolItem = ({ tool: [icon, label, flags = ""] }: { tool: Tool }) => {
  if (!icon) return <Divider />;
  const menu = flags.includes("v");
  const off = flags.includes("!");
  return (
    <ToolButton type="button" aria-label={label} disabled={off} $menu={menu} $checked={flags.includes("*")}>
      <Icon name={icon} />
      {menu && <Triangle off={off} />}
    </ToolButton>
  );
};

const Spin = ({ value, label }: { value: string; label: string }) => (
  <Box $width={94}>
    <SpinInput defaultValue={value} aria-label={label} />
    <BoxEnd $width={14}>
      <StepButton type="button" aria-label={`Increase ${label}`}><Triangle up /></StepButton>
      <StepButton type="button" aria-label={`Decrease ${label}`}><Triangle /></StepButton>
    </BoxEnd>
  </Box>
);

export default function App() {
  return (
    <Window>
      <GlobalStyle />
      <TitleBar>
        <Title>Untitled Project — QGIS</Title>
        <WindowButtons>
          <RoundButton type="button" aria-label="Minimize">
            <svg width="10" height="10"><path d="M1 7.500h8" stroke="currentColor" /></svg>
          </RoundButton>
          <RoundButton type="button" aria-label="Restore">
            <svg width="10" height="10" fill="none" stroke="currentColor"><path d="M1.500 3.500h5v5h-5z" strokeWidth="1.300" /><path d="M3.500 1.500h5v5" opacity=".5" /></svg>
          </RoundButton>
          <RoundButton type="button" aria-label="Close">
            <svg width="10" height="10"><path d="M1.500 1.500l7 7M8.500 1.500l-7 7" stroke="currentColor" strokeWidth="1.600" /></svg>
          </RoundButton>
        </WindowButtons>
      </TitleBar>

      <MenuBar>
        {menus.map(([name, i]) => (
          <MenuItem type="button" key={name}>
            {name.slice(0, i)}<Mnemonic>{name[i]}</Mnemonic>{name.slice(i + 1)}
          </MenuItem>
        ))}
      </MenuBar>

      {toolRows.map((row, r) => (
        <ToolRow key={r}>
          {row.map((group, g) => (
            <ToolGroup key={g}>
              <Grip />
              {group.map((tool, t) => <ToolItem tool={tool} key={t} />)}
            </ToolGroup>
          ))}
        </ToolRow>
      ))}

      <Workspace>
        <Dock>
          <DockHeader>
            <DockTitle>Layers</DockTitle>
            <DockButton type="button" aria-label="Float panel">
              <svg width="12" height="12" fill="none" stroke="#555"><rect x=".5" y=".5" width="11" height="11" rx="2" /><path d="M3 5h4v4H3zM5 5V3h4v4H7" /></svg>
            </DockButton>
            <DockButton type="button" aria-label="Close panel">
              <svg width="12" height="12" fill="none" stroke="#555"><rect x=".5" y=".5" width="11" height="11" rx="2" /><path d="M3 3l6 6M9 3L3 9" strokeWidth="1.800" /></svg>
            </DockButton>
          </DockHeader>
          <DockTools>
            {dockTools.map(([icon, label, flags = ""]) => (
              <SmallTool type="button" key={icon} aria-label={label} disabled={flags.includes("!")} $menu={flags.includes("v")}>
                <svg width="16" height="16" viewBox="0 0 16 16" aria-hidden="true">{smallIcons[icon]}</svg>
                {flags.includes("v") && <Triangle off />}
              </SmallTool>
            ))}
          </DockTools>
          <LayerTree />
        </Dock>
        <Splitter><SplitterDots /></Splitter>
        <MapCanvas aria-label="Map canvas" />
      </Workspace>

      <StatusBar>
        <Locator>
          <svg width="14" height="14" fill="none" stroke="#777" aria-hidden="true"><circle cx="5.500" cy="5.500" r="4.500" /><path d="M9 9l4 4" strokeWidth="1.300" /></svg>
          <LocatorInput placeholder="Type to locate (Ctrl+K)" aria-label="Type to locate" />
        </Locator>
        <Message>Ready</Message>
        <Field $after={4}>
          Coordinate
          <CoordInput defaultValue="0.615°,-2.496°" />
        </Field>
        <StatusButton type="button" aria-label="Toggle extents" $after={13}>
          <svg width="16" height="16" fill="none" stroke="#333"><path d="M2 2l9 8M5 1l8 7M1 5l9 8" strokeWidth="1.500" /><circle cx="9.500" cy="10.500" r="4" /><circle cx="4" cy="4" r="3" /><path d="M8 7l6-5M11 7l4-3" strokeDasharray="1.500 1" /></svg>
        </StatusButton>
        <Field $after={12}>
          Scale
          <Box $width={97}>
            <ScaleSelect defaultValue="1:1320569"><option>1:1320569</option></ScaleSelect>
            <BoxEnd $width={20}><Triangle /></BoxEnd>
          </Box>
        </Field>
        <StatusButton type="button" aria-label="Lock scale" $after={8}>
          <svg width="13" height="16"><path d="M3 8V5c0-5 7-5 7 0v3" fill="none" stroke="#777" strokeWidth="2" /><rect x=".5" y="7" width="12" height="8.500" rx="1" fill="#555" /></svg>
        </StatusButton>
        <Field $after={8}>Magnifier<Spin value="100%" label="Magnifier" /></Field>
        <Field $after={7} $gap={10}>Rotation<Spin value="0.0 °" label="Rotation" /></Field>
        <Field $after={14}>
          <CheckWrap>
            <CheckBox type="checkbox" defaultChecked />
            <svg width="12" height="12" viewBox="0 0 12 12" fill="none" stroke="#222" strokeWidth="2"><path d="M2.500 6l2.500 3.500L10 1.500" /></svg>
          </CheckWrap>
          Render
        </Field>
        <StatusButton type="button" $after={20}>
          <svg width="14" height="14" fill="none" stroke="#555"><circle cx="7" cy="7" r="6" /><path d="M1 7h12M7 1c-4 4-4 8 0 12M7 1c4 4 4 8 0 12" /></svg>
          EPSG:4326
        </StatusButton>
        <StatusButton type="button" aria-label="Messages" $after={0}>
          <svg width="18" height="16"><path d="M9 1c11 0 11 11 2 11.500L13 15l-5-2.500C-3 12-1 1 9 1z" fill="#555" /><path d="M5 6.800h1.500M8.500 6.800H10M12 6.800h1.500" stroke="#eee" strokeWidth="2" /></svg>
        </StatusButton>
        <Watermark>CSDN @雷动软件工作室</Watermark>
      </StatusBar>
    </Window>
  );
}
